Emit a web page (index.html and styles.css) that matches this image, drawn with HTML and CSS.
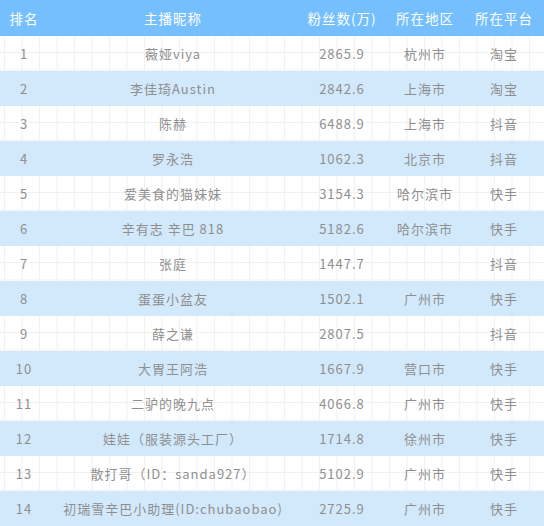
FILE: index.html
```html
<!DOCTYPE html>
<html lang="zh">
<head>
<meta charset="utf-8">
<link rel="stylesheet" href="styles.css">
</head>
<body>
<table class="rank">
<colgroup><col class="c1"><col class="c2"><col class="c3"><col class="c4"><col class="c5"></colgroup>
<thead>
<tr><th>排名</th><th>主播昵称</th><th>粉丝数(万)</th><th>所在地区</th><th>所在平台</th></tr>
</thead>
<tbody>
<tr><td>1</td><td>薇娅viya</td><td>2865.9</td><td>杭州市</td><td>淘宝</td></tr>
<tr class="alt"><td>2</td><td>李佳琦Austin</td><td>2842.6</td><td>上海市</td><td>淘宝</td></tr>
<tr><td>3</td><td>陈赫</td><td>6488.9</td><td>上海市</td><td>抖音</td></tr>
<tr class="alt"><td>4</td><td>罗永浩</td><td>1062.3</td><td>北京市</td><td>抖音</td></tr>
<tr><td>5</td><td>爱美食的猫妹妹</td><td>3154.3</td><td>哈尔滨市</td><td>快手</td></tr>
<tr class="alt"><td>6</td><td>辛有志 辛巴 818</td><td>5182.6</td><td>哈尔滨市</td><td>快手</td></tr>
<tr><td>7</td><td>张庭</td><td>1447.7</td><td></td><td>抖音</td></tr>
<tr class="alt"><td>8</td><td>蛋蛋小盆友</td><td>1502.1</td><td>广州市</td><td>快手</td></tr>
<tr><td>9</td><td>薛之谦</td><td>2807.5</td><td></td><td>抖音</td></tr>
<tr class="alt"><td>10</td><td>大胃王阿浩</td><td>1667.9</td><td>营口市</td><td>快手</td></tr>
<tr><td>11</td><td>二驴的晚九点</td><td>4066.8</td><td>广州市</td><td>快手</td></tr>
<tr class="alt"><td>12</td><td>娃娃（服装源头工厂）</td><td>1714.8</td><td>徐州市</td><td>快手</td></tr>
<tr><td>13</td><td>散打哥（ID：sanda927）</td><td>5102.9</td><td>广州市</td><td>快手</td></tr>
<tr class="alt"><td>14</td><td>初瑞雪辛巴小助理(ID:chubaobao)</td><td>2725.9</td><td>广州市</td><td>快手</td></tr>
</tbody>
</table>
</body>
</html>
```
FILE: styles.css
```css
html, body {
  margin: 0;
  padding: 0;
}
body {
  width: 544px;
  height: 526px;
  overflow: hidden;
  background-color: #ffffff;
  background-image:
    linear-gradient(to right, #f1f1f1 1px, transparent 1px),
    linear-gradient(to bottom, #f1f1f1 1px, transparent 1px);
  background-size: 17.5px 17.5px;
  background-position: 4px 34.5px;
  font-family: "Noto Sans CJK SC", "Noto Sans", sans-serif;
}
.rank {
  width: 544px;
  border-collapse: collapse;
  table-layout: fixed;
}
.c1 { width: 48px; }
.c2 { width: 250px; }
.c3 { width: 88px; }
.c4 { width: 78px; }
.c5 { width: 80px; }
.rank th {
  height: 36px;
  padding: 0;
  background: #75bfff;
  color: #ffffff;
  font-size: 13.5px;
  font-weight: normal;
  letter-spacing: 1px;
  text-align: center;
}
.rank td {
  height: 35px;
  padding: 0;
  color: #8f8f8f;
  font-size: 13px;
  letter-spacing: 1px;
  text-align: center;
  white-space: nowrap;
}
.rank tr.alt td {
  background: #d2e9fc;
}
```
